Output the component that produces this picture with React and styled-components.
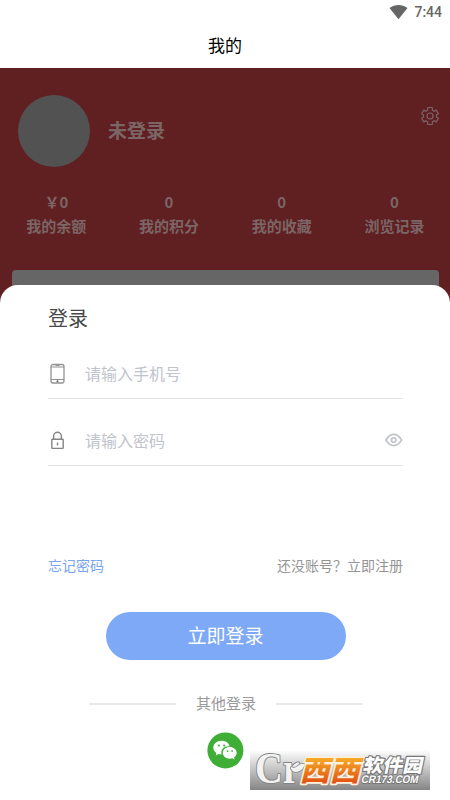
import React from "react";
import styled, { createGlobalStyle } from "styled-components";

const GlobalStyle = createGlobalStyle`
  * { box-sizing: border-box; }
  body { margin: 0; background: #fff; }
  svg { display: block; overflow: visible; }
`;

const Screen = styled.div`
  position: relative;
  width: 450px;
  height: 800px;
  overflow: hidden;
  display: flex;
  flex-direction: column;
  background: #fff;
  font-family: "Noto Sans CJK SC", sans-serif;
`;

const StatusBar = styled.div`
  height: 24px;
  flex: none;
  display: flex;
  align-items: center;
  justify-content: flex-end;
  gap: 6px;
  padding: 0 8px 0 0;
  color: #666;
  font: 500 14px/24px Roboto, sans-serif;
`;

const TitleBar = styled.header`
  height: 44px;
  flex: none;
  text-align: center;
  color: #000;
  font-size: 17px;
  font-weight: 400;
  line-height: 42px;
`;

const Profile = styled.main`
  flex: 1;
  background: #601f20;
  color: #7b6566;
  display: flex;
  flex-direction: column;
`;

const UserRow = styled.div`
  display: flex;
  align-items: center;
  height: 72px;
  margin: 27px 11px 0 18px;
`;

const Avatar = styled.div`
  width: 72px;
  height: 72px;
  border-radius: 50%;
  background: #525252;
`;

const UserName = styled.div`
  flex: 1;
  margin-left: 18px;
  padding-bottom: 2px;
  font-size: 19px;
  font-weight: 700;
  line-height: 28px;
`;

const SettingsButton = styled.div`
  align-self: flex-start;
  margin: 11px 0.5px 0 0;
`;

const Stats = styled.div`
  display: grid;
  grid-template-columns: repeat(4, 112.7px);
  margin-top: 23px;
  text-align: center;
  font-size: 15px;
  font-weight: 700;
  line-height: 24px;
`;

const OrderCard = styled.div`
  height: 100px;
  margin: 32px 11px 0 12px;
  border-radius: 4px;
  background: #666;
`;

const Sheet = styled.section`
  position: absolute;
  left: 0;
  right: 0;
  bottom: 0;
  height: 515px;
  padding: 0 47px 0 48px;
  border-radius: 18px 18px 0 0;
  background: #fff;
  display: flex;
  flex-direction: column;
`;

const SheetTitle = styled.h1`
  margin: 18px 0 0;
  color: #484848;
  font-size: 20px;
  font-weight: 400;
  line-height: 30px;
`;

const Field = styled.label`
  display: flex;
  align-items: center;
  height: ${(p) => p.$height}px;
  margin-top: ${(p) => p.$top}px;
  padding-bottom: 1px;
  border-bottom: 1px solid #e2e3e5;
`;

const FieldIcon = styled.span`
  width: 20px;
  margin-right: 17px;
`;

const Placeholder = styled.span`
  flex: 1;
  padding-bottom: ${(p) => p.$lift || 0}px;
  color: #c0c4cc;
  font-size: 16px;
  line-height: 24px;
`;

const Links = styled.div`
  display: flex;
  justify-content: space-between;
  height: 20px;
  margin-top: 89px;
  font-size: 14px;
  line-height: 20px;
`;

const Link = styled.span`
  color: ${(p) => p.$color};
`;

const LoginButton = styled.button`
  width: 240px;
  height: 48px;
  margin: 37px 0 0 58px;
  padding: 0 1px 2px 0;
  border: 0;
  border-radius: 24px;
  background: #7da9f7;
  color: #fff;
  font-family: inherit;
  font-size: 19px;
  line-height: 28px;
`;

const Divider = styled.div`
  display: flex;
  align-items: center;
  justify-content: space-between;
  width: 274px;
  height: 24px;
  margin: 31px 0 0 41px;
  color: #999;
  font-size: 15px;
  line-height: 22px;
`;

const DividerLabel = styled.span`
  padding-bottom: 1px;
`;

const Rule = styled.span`
  width: 87px;
  height: 2px;
  margin-top: 1px;
  background: #e8e8e8;
`;

const WechatButton = styled.div`
  width: 36px;
  height: 36px;
  margin: 17px 0 0 159px;
`;

const Watermark = styled.div`
  position: absolute;
  left: 250px;
  top: 750px;
  width: 180px;
  height: 40px;
  background: linear-gradient(#fff, #858585);
`;

const WifiIcon = () => (
  <svg width="18" height="15" viewBox="0 0 18 15" fill="#666">
    <path d="M-.5 3C4.800-1 12.200-1 17.500 3L8.500 14.200Z" />
  </svg>
);

const GearIcon = () => (
  <svg width="18" height="20" viewBox="0 0 18 20" fill="none" stroke="#7b6566" strokeWidth="1.2" strokeLinejoin="round">
    <path d="M6.7 1.500h4.600v2.100q0 .7.7 1l.6.3q.6.3 1.200 0l1.500-.8 2.100 3.600-1.400.9q-.7.5-.7 1.400t.7 1.400l1.400.9-2.100 3.600-1.500-.8q-.6-.3-1.200 0l-.6.3q-.7.3-.7 1v2.100H6.700v-2.100q0-.7-.7-1l-.6-.3q-.6-.3-1.200 0l-1.500.8L.6 12.300l1.400-.9q.7-.5.7-1.400t-.7-1.400L.6 7.700l2.100-3.600 1.500.8q.6.300 1.200 0l.6-.3q.7-.3.7-1Z" />
    <circle cx="9" cy="10" r="3" />
  </svg>
);

const PhoneIcon = () => (
  <svg width="20" height="22" viewBox="0 0 20 22" fill="none" stroke="#929292" strokeWidth="1.3">
    <rect x="3" y="1.500" width="13" height="18.500" rx="2" />
    <path d="M3 4h13M3 16.500h13M7.500 2.600h4" strokeWidth="1" />
    <circle cx="9.500" cy="18.300" r=".8" fill="#666" stroke="#666" strokeWidth=".5" />
  </svg>
);

const LockIcon = () => (
  <svg width="20" height="22" viewBox="0 0 20 22" fill="none" stroke="#858585" strokeWidth="1.400">
    <rect x="3.800" y="10.200" width="11.400" height="9.200" rx=".7" />
    <path d="M5.600 10.200V7.200a3.900 3.900 0 0 1 7.800 0v3M9.500 13.400v3" />
  </svg>
);

const EyeIcon = () => (
  <svg width="18" height="14" viewBox="0 0 18 14" fill="none" stroke="#bfc3ca" strokeWidth="1.600">
    <path d="M.8 7q3.500-5.600 7.900-5.600T16.600 7q-3.500 5.600-7.900 5.600T.8 7Z" />
    <circle cx="8.700" cy="7" r="2.300" />
  </svg>
);

const WechatIcon = () => (
  <svg width="36" height="36" viewBox="0 0 36 36">
    <circle cx="18.400" cy="18.400" r="18" fill="#3eae36" />
    <path fill="#fff" d="M14.500 8.800c-4.700 0-8.200 3-8.200 6.900 0 2.300 1.200 4.100 3.200 5.400l-.8 2.400 2.900-1.400c1.100.3 2 .4 3.100.4-1.600-5 2.400-8.600 8-8.300-.8-3.200-4.100-5.400-8.200-5.400Z" />
    <path fill="#fff" d="M29.700 20.800c0-3.300-3.200-5.900-6.900-5.900-4 0-7 2.600-7 5.900s3 5.900 7 5.900c.8 0 1.700-.2 2.500-.4l2.300 1.200-.6-2c1.600-1.200 2.700-2.900 2.700-4.700Z" />
    <g fill="#3eae36">
      <circle cx="11.800" cy="13.500" r="1.100" /><circle cx="17.200" cy="13.500" r="1.100" />
      <circle cx="20.500" cy="19.100" r=".9" /><circle cx="25.100" cy="19.100" r=".9" />
    </g>
  </svg>
);

const BrandMark = () => (
  <svg width="180" height="40" viewBox="0 0 180 40">
    <defs>
      <linearGradient id="orange" x1="0" y1="0" x2="0" y2="1">
        <stop offset="0.2" stopColor="#f8b52a" />
        <stop offset="0.9" stopColor="#e04d12" />
      </linearGradient>
    </defs>
    <g fill="#f2f2f2" stroke="#858585" strokeLinejoin="round" paintOrder="stroke">
      <text x="5" y="33" fontSize="45" fontWeight="700" strokeWidth="2" textLength="45" lengthAdjust="spacingAndGlyphs" fontFamily="Liberation Serif, serif">Cr</text>
      <path d="M41 17q4 1.500 6-.5q3-3.500 8-2.500q-3 8-9 8q-3.500 0-5-3Z" strokeWidth="1.600" />
    </g>
    <g transform="skewX(-14)" fill="url(#orange)" stroke="#fff0dc" strokeLinejoin="round" paintOrder="stroke">
      <text x="57" y="30.500" fontSize="28.500" fontWeight="900" strokeWidth="3.200" textLength="60" lengthAdjust="spacingAndGlyphs" fontFamily="Noto Sans CJK SC, sans-serif">西西</text>
    </g>
    <g transform="skewX(-12)" fill="#fff" stroke="#777" paintOrder="stroke" strokeLinejoin="round">
      <text x="117" y="22.500" fontSize="18.500" fontWeight="900" strokeWidth="2.200" textLength="60" lengthAdjust="spacingAndGlyphs" fontFamily="Noto Sans CJK SC, sans-serif">软件园</text>
      <text x="118" y="33.500" fontSize="11" fontWeight="700" strokeWidth="2" textLength="57" lengthAdjust="spacingAndGlyphs" fontFamily="Liberation Sans, sans-serif">CR173.COM</text>
    </g>
  </svg>
);

const stats = [
  ["￥0", "我的余额"],
  ["0", "我的积分"],
  ["0", "我的收藏"],
  ["0", "浏览记录"],
];

export default function App() {
  return (
    <Screen>
      <GlobalStyle />
      <StatusBar><WifiIcon />7:44</StatusBar>
      <TitleBar>我的</TitleBar>
      <Profile>
        <UserRow>
          <Avatar />
          <UserName>未登录</UserName>
          <SettingsButton><GearIcon /></SettingsButton>
        </UserRow>
        <Stats>
          {stats.map(([value, label]) => (
            <div key={label}><div>{value}</div><div>{label}</div></div>
          ))}
        </Stats>
        <OrderCard />
      </Profile>
      <Sheet>
        <SheetTitle>登录</SheetTitle>
        <Field $height={49} $top={17}>
          <FieldIcon><PhoneIcon /></FieldIcon>
          <Placeholder $lift={1}>请输入手机号</Placeholder>
        </Field>
        <Field $height={51} $top={16}>
          <FieldIcon><LockIcon /></FieldIcon>
          <Placeholder>请输入密码</Placeholder>
          <EyeIcon />
        </Field>
        <Links>
          <Link $color="#78a5ec">忘记密码</Link>
          <Link $color="#949494">还没账号？立即注册</Link>
        </Links>
        <LoginButton>立即登录</LoginButton>
        <Divider><Rule /><DividerLabel>其他登录</DividerLabel><Rule /></Divider>
        <WechatButton><WechatIcon /></WechatButton>
      </Sheet>
      <Watermark><BrandMark /></Watermark>
    </Screen>
  );
}
